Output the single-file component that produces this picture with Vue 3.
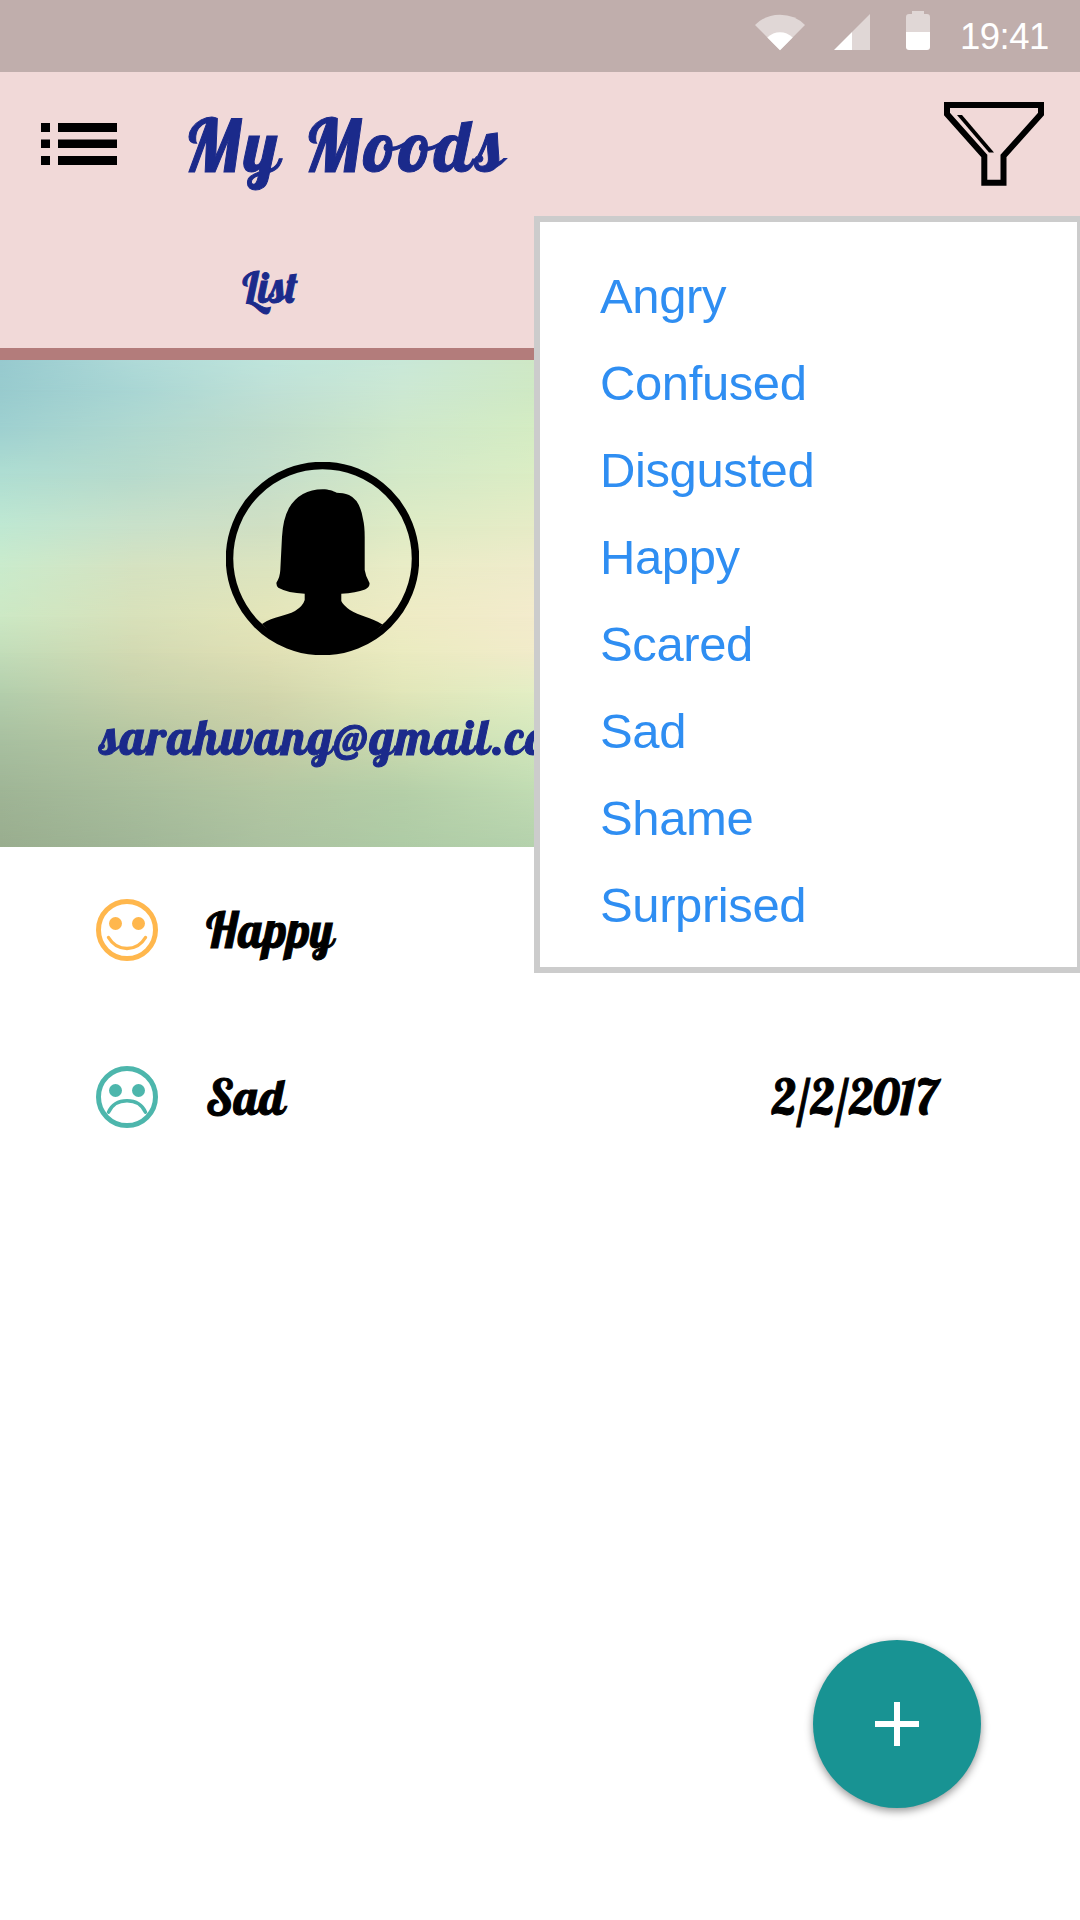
<script setup>
const filters = ['Angry', 'Confused', 'Disgusted', 'Happy', 'Scared', 'Sad', 'Shame', 'Surprised']

const entries = [
  { mood: 'Happy', color: '#ffb74d', mouth: 'M12.5 38.5Q19 49.5 31 49.5T49.5 38.5', date: '' },
  { mood: 'Sad', color: '#4db6ac', mouth: 'M12.5 46.3Q17.5 34.8 31 34.8T49.5 46.3', date: '2/2/2017' }
]

// Backdrop colours: [offset from top, colours from left to right]
const rows = [
  [0, '#97cacf,#afdad8,#bfe5dc,#c9e8d8,#cfe8c6'],
  [30, '#98cbce,#a9d6d4,#bfe0d6,#cce8d3,#cfe9c4'],
  [67, '#9ed0d0,#afd8d0,#bfddcd,#cee8cb,#d4ecc3'],
  [113, '#aeddd2,#b6dacc,#c4decb,#d3e9c8,#dbedc4'],
  [167, '#bfe8d2,#c9e1ca,#d0dfc3,#deebc5,#e6ebc6'],
  [207, '#caebcc,#d5e2c1,#dce4bf,#e9ecc6,#efebcb'],
  [257, '#cce8c4,#d8e1ba,#e4e5b9,#eeebc4,#f3ebcc'],
  [293, '#c2ddb9,#d2d9b2,#e0e0b5,#eaebc0,#f1ebca'],
  [333, '#b3ceac,#c6d1aa,#d2d6ac,#e1e6b9,#e3eec4'],
  [380, '#a8c0a0,#b4c5a0,#c4cca5,#ccdcb0,#d2e7bc'],
  [430, '#9fb596,#a9be9c,#b3c7a2,#b5cfa8,#c1dcb3'],
  [487, '#99ad8e,#a0b697,#abc1a0,#aecba5,#b4d1ac']
]
const layers = rows.map(([y, colors], i) => {
  const stops = colors.split(',').map((c, n) => `${c} ${n * 134}px`).join(',')
  const mask = i ? `linear-gradient(transparent ${rows[i - 1][0]}px, #000 ${y}px)` : 'none'
  return { backgroundImage: `linear-gradient(90deg, ${stops})`, maskImage: mask }
})
</script>

<template>
  <div class="screen">
    <div class="status">
      <svg class="signals" width="176" height="42" viewBox="755 10 176 42">
        <g fill="#fff">
          <path opacity=".5" d="M780 50.3 755 25Q765 14.7 780 14.7T805 25Z" />
          <path d="M780 50.3 767.3 37.6Q773 32.3 780 32.3T792.7 37.6Z" />
          <path opacity=".5" d="M852 32 870 14V50H852Z" />
          <path d="M834 50 852 32V50Z" />
          <path opacity=".5" d="M906 32V17Q906 14 909 14H912V11H924V14H927Q930 14 930 17V32Z" />
          <path d="M906 32H930V47Q930 50 927 50H909Q906 50 906 47Z" />
        </g>
      </svg>
      <span class="time">19:41</span>
    </div>

    <header class="header">
      <div class="toolbar">
        <svg class="list-icon" width="76" height="42" viewBox="0 0 76 42">
          <path d="M0 0H9V9H0ZM17 0H76V9H17ZM0 16.5H9V25H0ZM17 16.5H76V25H17ZM0 33H9V42H0ZM17 33H76V42H17Z" />
        </svg>
        <h1 class="script title">My Moods</h1>
        <svg class="funnel" width="100" height="84" viewBox="944 102 100 84">
          <path d="M947 105H1041V114L1003.5 156V182.7H984.3V156L947 114Z" fill="none" stroke="#000" stroke-width="6" />
          <path d="M957 115H962L994 152.5H989Z" />
        </svg>
      </div>
      <div class="tabs">
        <span class="script tab">List</span>
      </div>
    </header>

    <section class="profile">
      <div v-for="(layer, i) in layers" :key="i" class="layer" :style="layer"></div>
      <svg class="avatar" width="193" height="193" viewBox="0 0 193 193">
        <circle cx="96.5" cy="96.5" r="93" fill="none" stroke="#000" stroke-width="7.5" />
        <path d="M96.7 27.3C103 27.3 107 29 110.7 30.7C115 31 119 31 123 33Q134 38 137 57Q138.7 64 138.7 75V108Q139.5 114 143.5 121Q144 125 139 127.5Q130 131 115.3 131.7V139Q117 143 124 148C133 154 145 155 156.5 162.5Q130 190 96.5 191Q62 190 36 162C48 154 60 154 69 149Q77 144 78.7 138V131.7Q62 131 52.3 125.7Q50 123.5 50.5 120.5Q54 115 54.3 108L56 74.7Q57 57 63 46Q74 27.5 96.7 27.3Z" />
      </svg>
      <div class="script email">sarahwang@gmail.com</div>
    </section>

    <main class="entries">
      <div v-for="e in entries" :key="e.mood" class="entry">
        <svg width="62" height="62" viewBox="0 0 62 62">
          <circle cx="31" cy="31" r="28.5" fill="none" :stroke="e.color" stroke-width="5" />
          <circle cx="19.5" cy="24.5" r="6.5" :fill="e.color" />
          <circle cx="42.5" cy="24.5" r="6.5" :fill="e.color" />
          <path :d="e.mouth" fill="none" :stroke="e.color" stroke-width="3.4" stroke-linecap="round" />
        </svg>
        <span class="script mood">{{ e.mood }}</span>
        <span v-if="e.date" class="script date">{{ e.date }}</span>
      </div>
    </main>

    <ul class="menu">
      <li v-for="f in filters" :key="f">{{ f }}</li>
    </ul>

    <button class="fab" aria-label="Add mood">
      <svg width="44" height="44" viewBox="0 0 44 44"><path d="M19 0H25V19H44V25H25V44H19V25H0V19H19Z" fill="#fff" /></svg>
    </button>
  </div>
</template>

<style>
body { margin: 0; }
</style>

<style scoped>
.screen { position: relative; width: 1080px; height: 1920px; overflow: hidden; background: #fff; font-family: "Liberation Sans", sans-serif; }
svg { display: block; flex: none; }
.status { box-sizing: border-box; height: 72px; padding-left: 755px; display: flex; align-items: flex-start; background: #c0aeac; }
.signals { margin-top: 10px; }
.time { margin-left: 29px; margin-top: 16px; font-size: 36.5px; letter-spacing: -.5px; line-height: 42px; color: #fff; }
.header { height: 276px; background: #f1d9d8; border-bottom: 12px solid #b37c7b; }
.toolbar { display: flex; align-items: flex-start; height: 144px; padding: 0 36px 0 41px; }
.list-icon { margin-top: 51px; }
.title { margin: 28px 0 0 67px; font-size: 72px; letter-spacing: 3.6px; word-spacing: 2px; }
.funnel { margin-left: auto; margin-top: 30px; }
.tabs { display: flex; width: 540px; justify-content: center; padding-top: 46px; }
.tab { font-size: 42px; }
.script { font-family: "Lobster", "Liberation Serif", serif; font-weight: 400; line-height: 1.25; white-space: nowrap; color: #1b2a8b; -webkit-text-stroke: 1px currentColor; }
.profile { position: relative; height: 487px; box-sizing: border-box; padding-top: 102px; }
.layer { position: absolute; inset: 0; }
.avatar { position: relative; margin-left: 226px; }
.email { position: relative; margin: 51px 0 0 100px; font-size: 49px; letter-spacing: 1.5px; }
.entries { display: flex; flex-direction: column; }
.entry { box-sizing: border-box; display: flex; align-items: center; height: 167px; padding: 0 142px 1px 96px; }
.mood { margin-left: 48px; letter-spacing: .6px; }
.date { margin-left: auto; }
.mood, .date { font-size: 48px; color: #000; }
.menu { position: absolute; left: 534px; top: 216px; box-sizing: border-box; width: 549px; height: 757px; margin: 0; padding: 31px 0 0 60px; border: 6px solid #ccc; background: #fff; list-style: none; font-size: 49px; letter-spacing: -.4px; line-height: 87px; color: #2f8ef2; }
.fab { position: absolute; left: 813px; top: 1640px; width: 168px; height: 168px; display: flex; align-items: center; justify-content: center; padding: 0; border: 0; border-radius: 50%; background: #189393; box-shadow: 0 3px 9px rgba(0, 0, 0, .42); }
</style>
